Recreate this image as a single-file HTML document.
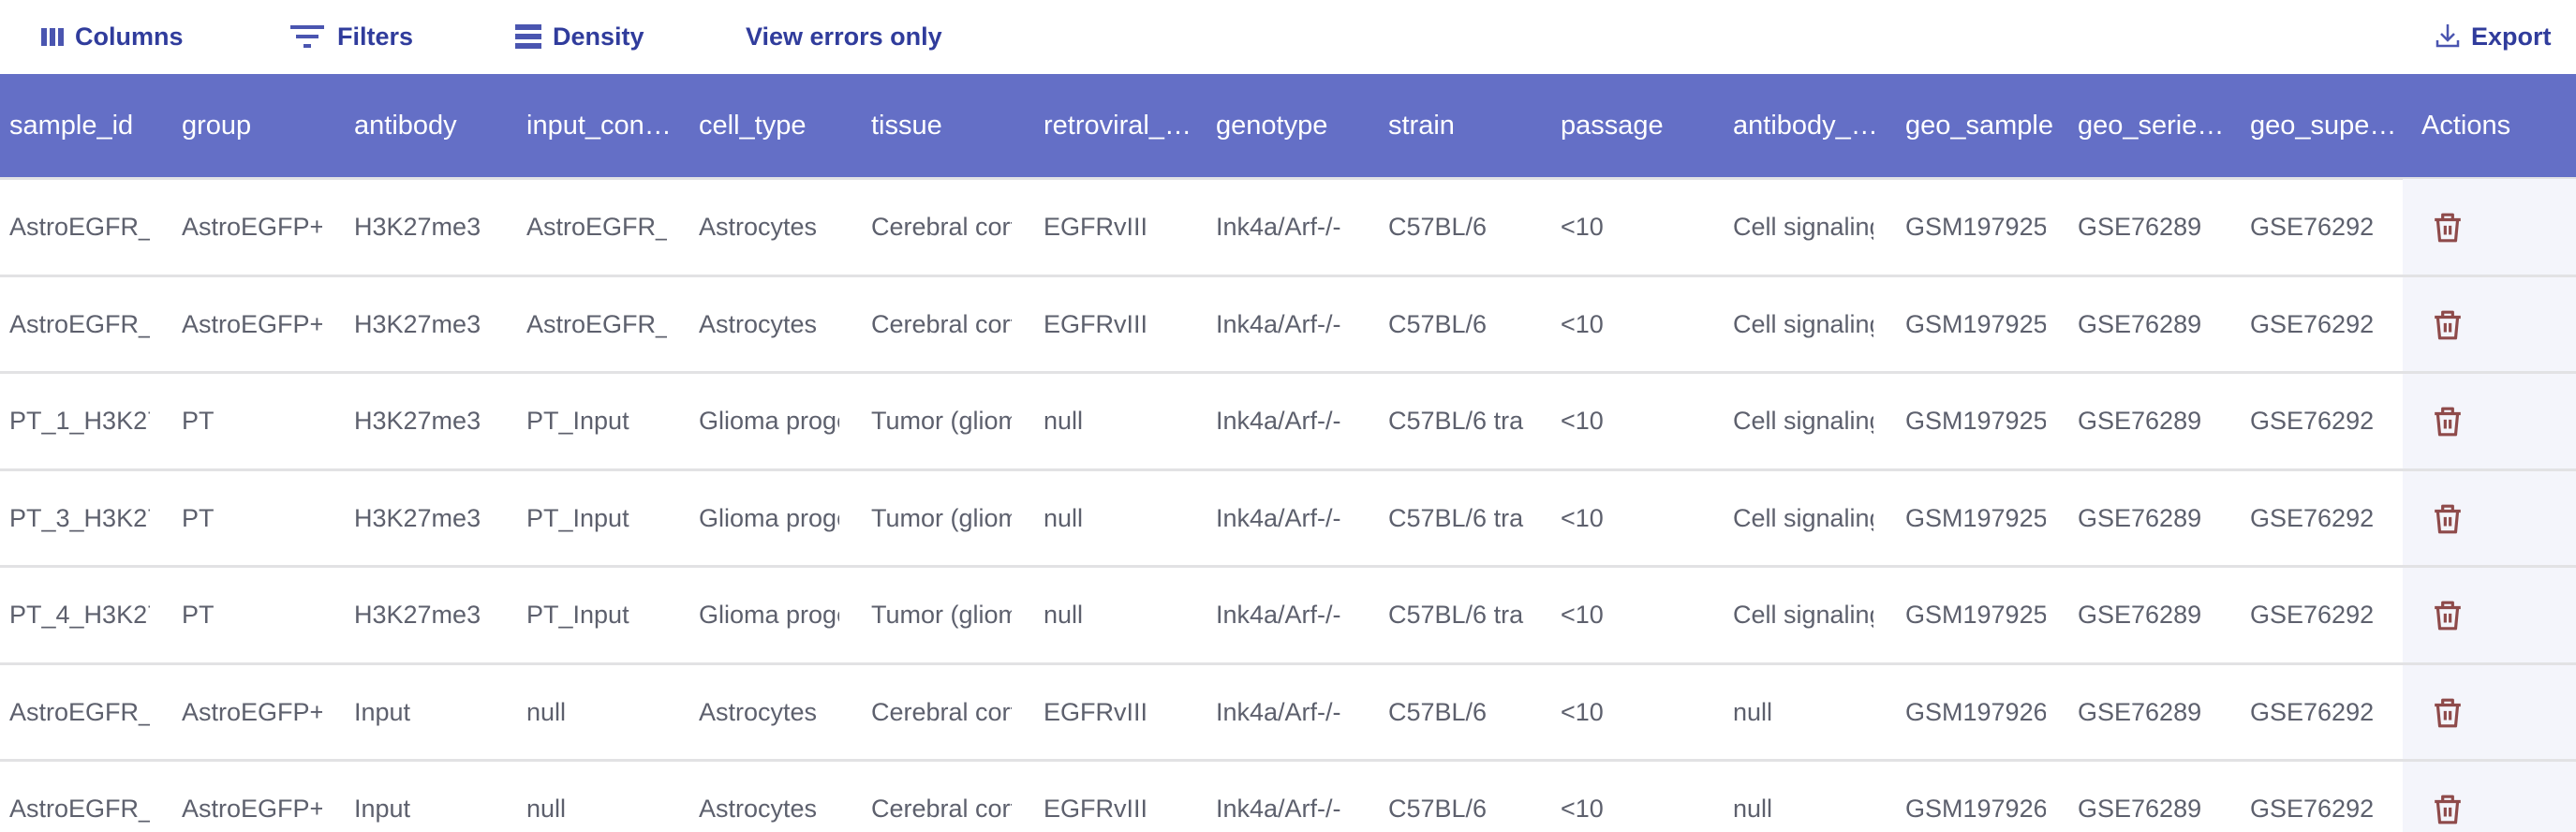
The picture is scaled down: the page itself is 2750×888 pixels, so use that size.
<!DOCTYPE html>
<html style="width:2750px;height:888px;overflow:hidden"><head><meta charset="utf-8"><style>
*{margin:0;padding:0;box-sizing:border-box}
body{width:2750px;height:888px;overflow:hidden;background:#fff;font-family:"Liberation Sans",sans-serif;position:relative}
.tb{position:absolute;top:22px;font-size:27px;font-weight:bold;color:#303c9c;line-height:34px;white-space:nowrap}
.hdr{position:absolute;left:0;top:79px;width:2750px;height:110px;background:#646fc6}
.hc{position:absolute;top:0;height:110px;line-height:110px;color:#fff;font-size:29px;white-space:nowrap;overflow:hidden;text-overflow:ellipsis;width:160px}
.grey{position:absolute;left:2565px;top:191px;width:185px;height:697px;background:#f4f5fb}
.row{position:absolute;left:0;width:2750px;height:103.5px;border-bottom:3px solid #e2e2e4}
.c{position:absolute;top:0;height:100px;line-height:100px;font-size:27px;color:#5d606d;white-space:nowrap;overflow:hidden;width:150px}
.tr{position:absolute;left:2597px;top:34px}
</style></head><body>
<div class="tb" style="left:42px"><svg width="28" height="22" viewBox="0 0 28 22" style="vertical-align:-2px;margin-right:10px"><rect x="2" y="2" width="6" height="19" fill="#4a55b0"/><rect x="11" y="2" width="6" height="19" fill="#4a55b0"/><rect x="20" y="2" width="6" height="19" fill="#4a55b0"/></svg>Columns</div>
<div class="tb" style="left:310px"><svg width="36" height="26" viewBox="0 0 36 26" style="vertical-align:-4px;margin-right:14px"><rect x="0" y="1" width="36" height="4" fill="#4a55b0"/><rect x="6" y="11" width="24" height="4" fill="#4a55b0"/><rect x="14" y="21" width="8" height="4" fill="#4a55b0"/></svg>Filters</div>
<div class="tb" style="left:550px"><svg width="28" height="26" viewBox="0 0 28 26" style="vertical-align:-4px;margin-right:12px"><rect x="0" y="0" width="28" height="6" fill="#4a55b0"/><rect x="0" y="10" width="28" height="6" fill="#4a55b0"/><rect x="0" y="20" width="28" height="6" fill="#4a55b0"/></svg>Density</div>
<div class="tb" style="left:796px">View errors only</div>
<div class="tb" style="left:2600px"><svg width="26" height="28" viewBox="0 0 26 28" style="vertical-align:-4px;margin-right:12px" fill="none" stroke="#4a55b0" stroke-width="2.5"><path d="M13 2v17M6 12l7 7 7-7M2 19v6h22v-6"/></svg>Export</div>
<div class="hdr">
<div class="hc" style="left:10px">sample_id</div><div class="hc" style="left:194px">group</div><div class="hc" style="left:378px">antibody</div><div class="hc" style="left:562px">input_control</div><div class="hc" style="left:746px">cell_type</div><div class="hc" style="left:930px">tissue</div><div class="hc" style="left:1114px">retroviral_vector</div><div class="hc" style="left:1298px">genotype</div><div class="hc" style="left:1482px">strain</div><div class="hc" style="left:1666px">passage</div><div class="hc" style="left:1850px">antibody_info</div><div class="hc" style="left:2034px">geo_sample</div><div class="hc" style="left:2218px">geo_series_id</div><div class="hc" style="left:2402px">geo_super_series</div><div class="hc" style="left:2585px">Actions</div>
</div>
<div style="position:absolute;left:0;top:189px;width:2750px;height:3px;background:#e2e2e4"></div>
<div class="grey"></div>
<div id="rows"></div>
<script>
var data=[
["AstroEGFR_H3K27me3","AstroEGFP+","H3K27me3","AstroEGFR_Input","Astrocytes","Cerebral cortex","EGFRvIII","Ink4a/Arf-/-","C57BL/6","<10","Cell signaling","GSM1979255","GSE76289","GSE76292"],
["AstroEGFR_H3K27me3","AstroEGFP+","H3K27me3","AstroEGFR_Input","Astrocytes","Cerebral cortex","EGFRvIII","Ink4a/Arf-/-","C57BL/6","<10","Cell signaling","GSM1979256","GSE76289","GSE76292"],
["PT_1_H3K27me3","PT","H3K27me3","PT_Input","Glioma progenitor","Tumor (glioma)","null","Ink4a/Arf-/-","C57BL/6 tra","<10","Cell signaling","GSM1979257","GSE76289","GSE76292"],
["PT_3_H3K27me3","PT","H3K27me3","PT_Input","Glioma progenitor","Tumor (glioma)","null","Ink4a/Arf-/-","C57BL/6 tra","<10","Cell signaling","GSM1979258","GSE76289","GSE76292"],
["PT_4_H3K27me3","PT","H3K27me3","PT_Input","Glioma progenitor","Tumor (glioma)","null","Ink4a/Arf-/-","C57BL/6 tra","<10","Cell signaling","GSM1979259","GSE76289","GSE76292"],
["AstroEGFR_Input","AstroEGFP+","Input","null","Astrocytes","Cerebral cortex","EGFRvIII","Ink4a/Arf-/-","C57BL/6","<10","null","GSM1979260","GSE76289","GSE76292"],
["AstroEGFR_Input","AstroEGFP+","Input","null","Astrocytes","Cerebral cortex","EGFRvIII","Ink4a/Arf-/-","C57BL/6","<10","null","GSM1979261","GSE76289","GSE76292"]];
var h="";
data.forEach(function(r,i){
 h+='<div class="row" style="top:'+(192+i*103.5)+'px">';
 r.forEach(function(t,j){h+='<div class="c" style="left:'+(10+j*184)+'px">'+t.replace(/</g,"&lt;")+'</div>';});
 h+='<svg class="tr" width="32" height="34" viewBox="0 0 30 32" fill="none" stroke="#8e4a4a" stroke-width="3" stroke-linejoin="round"><path d="M2 8h26M10 8V3h10v5M5 8l2 21h16l2-21"/><path d="M12.5 14v9M17.5 14v9"/></svg>';
 h+='</div>';
});
document.getElementById("rows").innerHTML=h;
</script>
</body></html>
